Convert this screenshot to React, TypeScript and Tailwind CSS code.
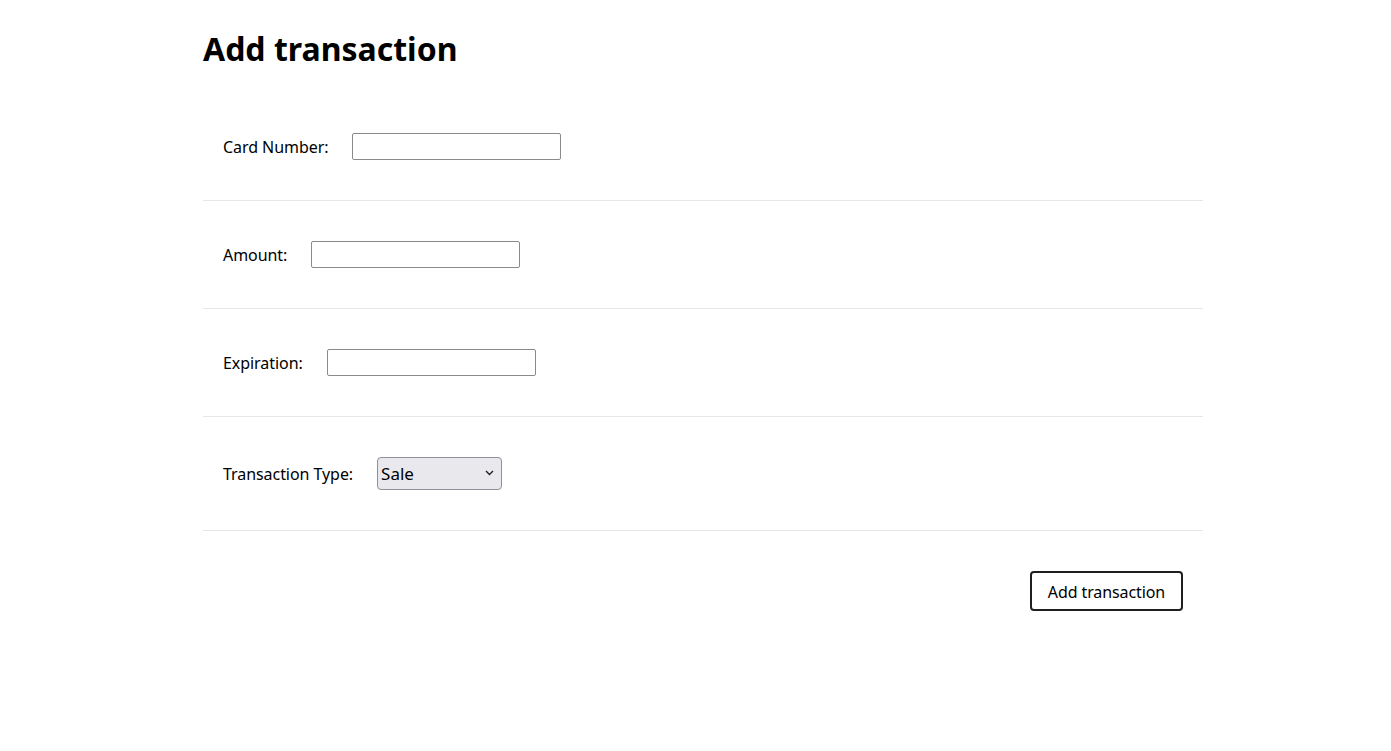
import { useState } from "react";

const fieldRows = [
  { label: "Card Number:", name: "cardNumber" },
  { label: "Amount:", name: "amount" },
  { label: "Expiration:", name: "expiration" },
];

export default function App() {
  const [type, setType] = useState("sale");

  return (
    <div className="min-h-screen bg-white text-black" style={{ fontFamily: '"Noto Sans", "Open Sans", sans-serif' }}>
      <div className="ml-[203px] w-[1000px]">
        <h1 className="pt-[26px] pb-[22px] text-[32px] font-bold leading-[45px]">Add transaction</h1>

        {fieldRows.map((row) => (
          <div key={row.name} className="flex items-center gap-6 border-b border-[#e6e6e6] px-5 py-10">
            <label className="pt-[2px] text-[16px] leading-[25px] tracking-[-0.06px]">{row.label}</label>
            <input
              type="text"
              name={row.name}
              className="h-[27px] w-[209px] rounded-[2px] border border-[#8a8a8a] px-1 text-[14px] outline-none"
            />
          </div>
        ))}

        <div className="flex items-center gap-6 border-b border-[#e6e6e6] px-5 py-10">
          <label className="pt-[2px] text-[16px] leading-[31px] tracking-[-0.06px]">Transaction Type:</label>
          <div className="relative">
            <select
              value={type}
              onChange={(e) => setType(e.target.value)}
              className="h-[33px] w-[125px] appearance-none rounded-[4px] border border-[#8f8f9d] bg-[#e9e9ed] pl-[3px] text-[17px] text-black outline-none"
              style={{ fontFamily: '"Noto Sans", "Open Sans", sans-serif' }}
            >
              <option value="sale">Sale</option>
              <option value="refund">Refund</option>
            </select>
            <svg
              className="pointer-events-none absolute right-[8px] top-[13px]"
              width="9"
              height="6"
              viewBox="0 0 9 6"
              fill="none"
            >
              <path d="M1 1l3.5 3.5L8 1" stroke="#222" strokeWidth="1.4" />
            </svg>
          </div>
        </div>

        <div className="flex justify-end px-5 py-10">
          <button className="h-[40px] w-[153px] rounded-[4px] border-2 border-[#1f1f1f] bg-white pt-[1px] text-[16px] tracking-[-0.1px]">
            Add transaction
          </button>
        </div>
      </div>
    </div>
  );
}
